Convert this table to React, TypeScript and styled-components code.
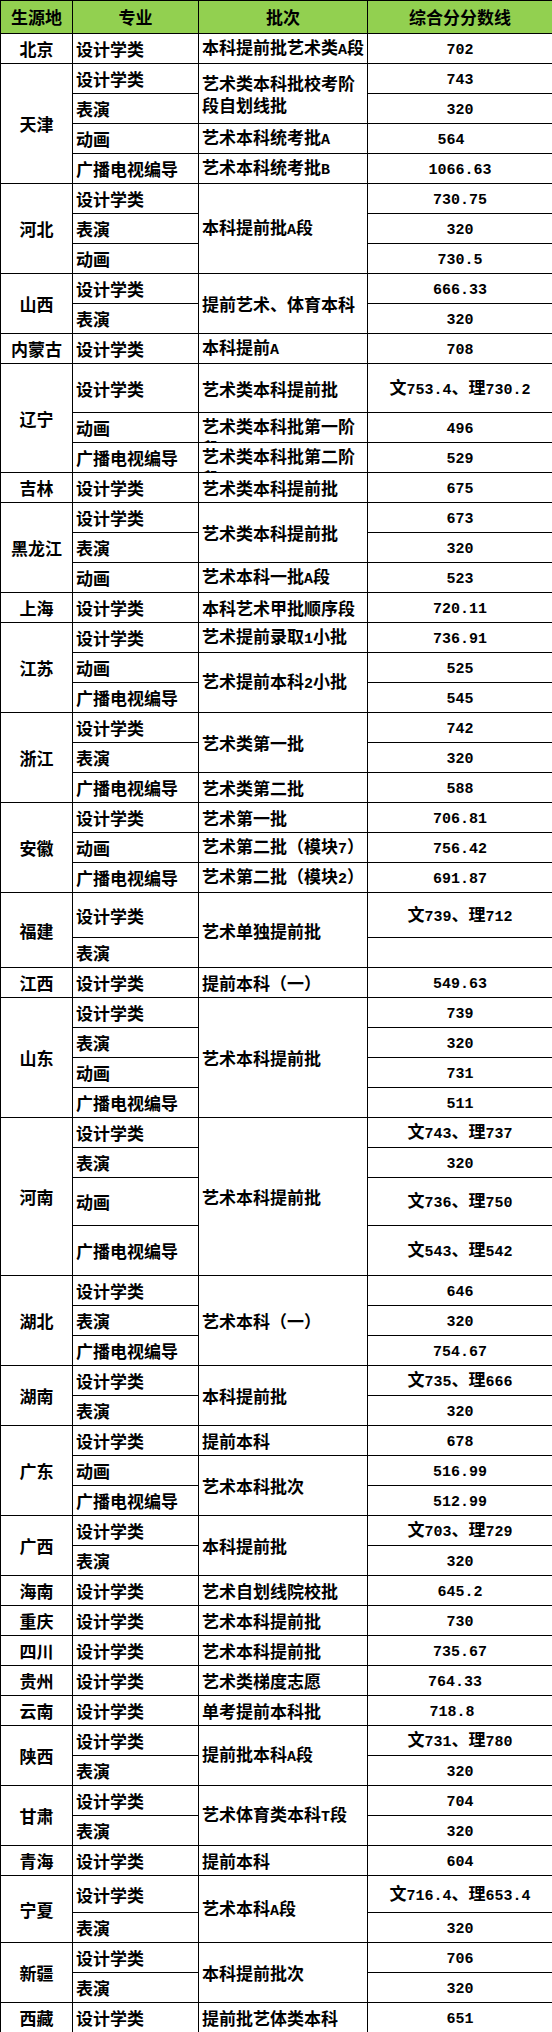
import React from "react";
import styled, { createGlobalStyle } from "styled-components";

const Global = createGlobalStyle`
  html, body { margin: 0; padding: 0; background: #ffffff; }
  body { font-family: "Noto Sans CJK SC", sans-serif; }
`;

const Sheet = styled.table`
  width: 552px;
  border-collapse: collapse;
  table-layout: fixed;
  font-family: "Noto Sans CJK SC", "Noto Sans CJK JP", sans-serif;
  font-size: 17px;
  font-weight: 700;
  color: #000;
  line-height: 22px;
`;

const Row = styled.tr<{ $h: number }>`
  height: ${(p) => p.$h}px;
`;

const HeadCell = styled.th`
  background: #92d050;
  border: 1px solid #000;
  text-align: center;
  vertical-align: middle;
  font-weight: 700;
  padding: 0;
`;

const Cell = styled.td<{ $align: "left" | "center"; $nudge?: number; $top?: boolean }>`
  border: 1px solid #000;
  text-align: ${(p) => p.$align};
  vertical-align: ${(p) => (p.$top ? "top" : "middle")};
  padding: 1px ${(p) => (p.$align === "left" ? 2 : 0) + (p.$nudge ?? 0)}px 0
    ${(p) => (p.$align === "left" ? 3 : 0)}px;
  overflow: hidden;
  white-space: normal;
  word-break: break-all;
`;

const Clip = styled.div<{ $h: number }>`
  height: ${(p) => p.$h}px;
  overflow: hidden;
  padding-top: 1px;
  box-sizing: border-box;
`;

const Latin = styled.span`
  font-family: "Liberation Mono", monospace;
  font-size: 15px;
  font-weight: 700;
`;

function Txt({ s }: { s: string }) {
  const parts = s.split(/([\x20-\x7E]+)/).filter((x) => x.length > 0);
  return (
    <>
      {parts.map((p, i) =>
        /^[\x20-\x7E]+$/.test(p) ? <Latin key={i}>{p}</Latin> : <React.Fragment key={i}>{p}</React.Fragment>
      )}
    </>
  );
}

type Entry = {
  major: string;
  batch?: string | null; // string = new cell, null = covered by merge
  span?: number;
  clip?: boolean;
  score: string;
  h: number;
  nudge?: number;
};

type Group = { name: string; rows: Entry[] };

const S = "设计学类";
const B = "表演";
const D = "动画";
const G = "广播电视编导";

const data: Group[] = [
  { name: "北京", rows: [{ major: S, batch: "本科提前批艺术类A段", score: "702", h: 30 }] },
  {
    name: "天津",
    rows: [
      { major: S, batch: "艺术类本科批校考阶段自划线批", span: 2, score: "743", h: 30 },
      { major: B, batch: null, score: "320", h: 30 },
      { major: D, batch: "艺术本科统考批A", score: "564", h: 30, nudge: 18 },
      { major: G, batch: "艺术本科统考批B", score: "1066.63", h: 30 },
    ],
  },
  {
    name: "河北",
    rows: [
      { major: S, batch: "本科提前批A段", span: 3, score: "730.75", h: 30 },
      { major: B, batch: null, score: "320", h: 30 },
      { major: D, batch: null, score: "730.5", h: 30 },
    ],
  },
  {
    name: "山西",
    rows: [
      { major: S, batch: "提前艺术、体育本科", span: 2, score: "666.33", h: 30 },
      { major: B, batch: null, score: "320", h: 30 },
    ],
  },
  { name: "内蒙古", rows: [{ major: S, batch: "本科提前A", score: "708", h: 30 }] },
  {
    name: "辽宁",
    rows: [
      { major: S, batch: "艺术类本科提前批", score: "文753.4、理730.2", h: 49 },
      { major: D, batch: "艺术类本科批第一阶段", clip: true, score: "496", h: 30 },
      { major: G, batch: "艺术类本科批第二阶段", clip: true, score: "529", h: 30 },
    ],
  },
  { name: "吉林", rows: [{ major: S, batch: "艺术类本科提前批", score: "675", h: 30 }] },
  {
    name: "黑龙江",
    rows: [
      { major: S, batch: "艺术类本科提前批", span: 2, score: "673", h: 30 },
      { major: B, batch: null, score: "320", h: 30 },
      { major: D, batch: "艺术本科一批A段", score: "523", h: 30 },
    ],
  },
  { name: "上海", rows: [{ major: S, batch: "本科艺术甲批顺序段", score: "720.11", h: 30 }] },
  {
    name: "江苏",
    rows: [
      { major: S, batch: "艺术提前录取1小批", score: "736.91", h: 30 },
      { major: D, batch: "艺术提前本科2小批", span: 2, score: "525", h: 30 },
      { major: G, batch: null, score: "545", h: 30 },
    ],
  },
  {
    name: "浙江",
    rows: [
      { major: S, batch: "艺术类第一批", span: 2, score: "742", h: 30 },
      { major: B, batch: null, score: "320", h: 30 },
      { major: G, batch: "艺术类第二批", score: "588", h: 30 },
    ],
  },
  {
    name: "安徽",
    rows: [
      { major: S, batch: "艺术第一批", score: "706.81", h: 30 },
      { major: D, batch: "艺术第二批（模块7）", score: "756.42", h: 30 },
      { major: G, batch: "艺术第二批（模块2）", score: "691.87", h: 30 },
    ],
  },
  {
    name: "福建",
    rows: [
      { major: S, batch: "艺术单独提前批", span: 2, score: "文739、理712", h: 45 },
      { major: B, batch: null, score: "", h: 30 },
    ],
  },
  { name: "江西", rows: [{ major: S, batch: "提前本科（一）", score: "549.63", h: 30 }] },
  {
    name: "山东",
    rows: [
      { major: S, batch: "艺术本科提前批", span: 4, score: "739", h: 30 },
      { major: B, batch: null, score: "320", h: 30 },
      { major: D, batch: null, score: "731", h: 30 },
      { major: G, batch: null, score: "511", h: 30 },
    ],
  },
  {
    name: "河南",
    rows: [
      { major: S, batch: "艺术本科提前批", span: 4, score: "文743、理737", h: 30 },
      { major: B, batch: null, score: "320", h: 30 },
      { major: D, batch: null, score: "文736、理750", h: 48 },
      { major: G, batch: null, score: "文543、理542", h: 50 },
    ],
  },
  {
    name: "湖北",
    rows: [
      { major: S, batch: "艺术本科（一）", span: 3, score: "646", h: 30 },
      { major: B, batch: null, score: "320", h: 30 },
      { major: G, batch: null, score: "754.67", h: 30 },
    ],
  },
  {
    name: "湖南",
    rows: [
      { major: S, batch: "本科提前批", span: 2, score: "文735、理666", h: 30 },
      { major: B, batch: null, score: "320", h: 30 },
    ],
  },
  {
    name: "广东",
    rows: [
      { major: S, batch: "提前本科", score: "678", h: 30 },
      { major: D, batch: "艺术本科批次", span: 2, score: "516.99", h: 30 },
      { major: G, batch: null, score: "512.99", h: 30 },
    ],
  },
  {
    name: "广西",
    rows: [
      { major: S, batch: "本科提前批", span: 2, score: "文703、理729", h: 30 },
      { major: B, batch: null, score: "320", h: 30 },
    ],
  },
  { name: "海南", rows: [{ major: S, batch: "艺术自划线院校批", score: "645.2", h: 30 }] },
  { name: "重庆", rows: [{ major: S, batch: "艺术本科提前批", score: "730", h: 30 }] },
  { name: "四川", rows: [{ major: S, batch: "艺术本科提前批", score: "735.67", h: 30 }] },
  { name: "贵州", rows: [{ major: S, batch: "艺术类梯度志愿", score: "764.33", h: 30, nudge: 10 }] },
  { name: "云南", rows: [{ major: S, batch: "单考提前本科批", score: "718.8", h: 30, nudge: 16 }] },
  {
    name: "陕西",
    rows: [
      { major: S, batch: "提前批本科A段", span: 2, score: "文731、理780", h: 30 },
      { major: B, batch: null, score: "320", h: 30 },
    ],
  },
  {
    name: "甘肃",
    rows: [
      { major: S, batch: "艺术体育类本科T段", span: 2, score: "704", h: 30 },
      { major: B, batch: null, score: "320", h: 30 },
    ],
  },
  { name: "青海", rows: [{ major: S, batch: "提前本科", score: "604", h: 30 }] },
  {
    name: "宁夏",
    rows: [
      { major: S, batch: "艺术本科A段", span: 2, score: "文716.4、理653.4", h: 37 },
      { major: B, batch: null, score: "320", h: 30 },
    ],
  },
  {
    name: "新疆",
    rows: [
      { major: S, batch: "本科提前批次", span: 2, score: "706", h: 30 },
      { major: B, batch: null, score: "320", h: 30 },
    ],
  },
  { name: "西藏", rows: [{ major: S, batch: "提前批艺体类本科", score: "651", h: 30 }] },
];

export default function App() {
  return (
    <>
      <Global />
      <Sheet>
        <colgroup>
          <col style={{ width: 72 }} />
          <col style={{ width: 126 }} />
          <col style={{ width: 169 }} />
          <col style={{ width: 185 }} />
        </colgroup>
        <thead>
          <Row $h={33}>
            <HeadCell>生源地</HeadCell>
            <HeadCell>专业</HeadCell>
            <HeadCell>批次</HeadCell>
            <HeadCell>综合分分数线</HeadCell>
          </Row>
        </thead>
        <tbody>
          {data.map((g) =>
            g.rows.map((r, i) => (
              <Row key={g.name + i} $h={r.h}>
                {i === 0 && (
                  <Cell $align="center" rowSpan={g.rows.length}>
                    {g.name}
                  </Cell>
                )}
                <Cell $align="left">{r.major}</Cell>
                {r.batch !== null && r.batch !== undefined && (
                  <Cell $align="left" rowSpan={r.span ?? 1} $top={r.clip}>
                    {r.clip ? (
                      <Clip $h={r.h - 2}>
                        <Txt s={r.batch} />
                      </Clip>
                    ) : (
                      <Txt s={r.batch} />
                    )}
                  </Cell>
                )}
                <Cell $align="center" $nudge={r.nudge}>
                  <Txt s={r.score} />
                </Cell>
              </Row>
            ))
          )}
        </tbody>
      </Sheet>
    </>
  );
}
